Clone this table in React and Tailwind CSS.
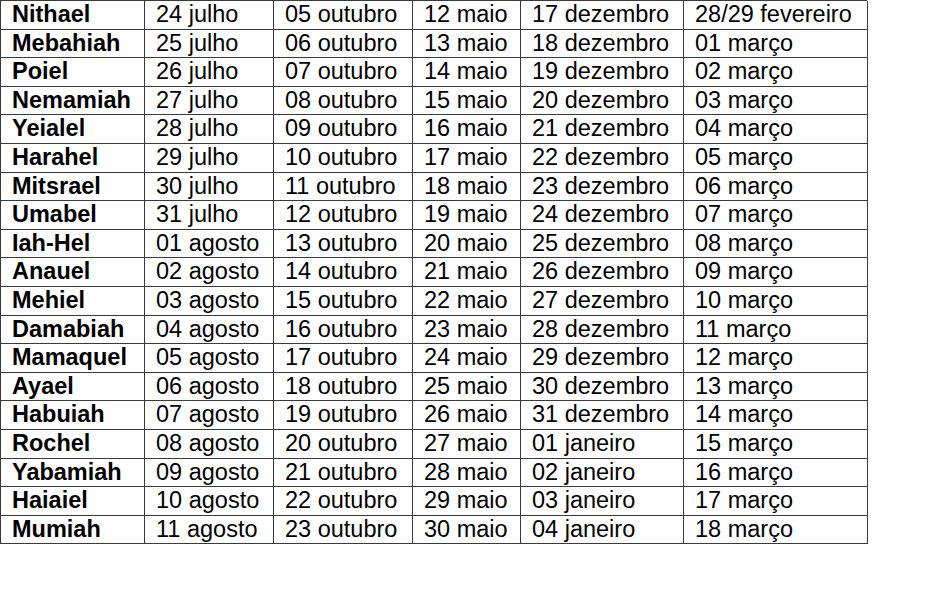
import React from "react";

const rows = [
  ["Nithael", "24 julho", "05 outubro", "12 maio", "17 dezembro", "28/29 fevereiro"],
  ["Mebahiah", "25 julho", "06 outubro", "13 maio", "18 dezembro", "01 março"],
  ["Poiel", "26 julho", "07 outubro", "14 maio", "19 dezembro", "02 março"],
  ["Nemamiah", "27 julho", "08 outubro", "15 maio", "20 dezembro", "03 março"],
  ["Yeialel", "28 julho", "09 outubro", "16 maio", "21 dezembro", "04 março"],
  ["Harahel", "29 julho", "10 outubro", "17 maio", "22 dezembro", "05 março"],
  ["Mitsrael", "30 julho", "11 outubro", "18 maio", "23 dezembro", "06 março"],
  ["Umabel", "31 julho", "12 outubro", "19 maio", "24 dezembro", "07 março"],
  ["Iah-Hel", "01 agosto", "13 outubro", "20 maio", "25 dezembro", "08 março"],
  ["Anauel", "02 agosto", "14 outubro", "21 maio", "26 dezembro", "09 março"],
  ["Mehiel", "03 agosto", "15 outubro", "22 maio", "27 dezembro", "10 março"],
  ["Damabiah", "04 agosto", "16 outubro", "23 maio", "28 dezembro", "11 março"],
  ["Mamaquel", "05 agosto", "17 outubro", "24 maio", "29 dezembro", "12 março"],
  ["Ayael", "06 agosto", "18 outubro", "25 maio", "30 dezembro", "13 março"],
  ["Habuiah", "07 agosto", "19 outubro", "26 maio", "31 dezembro", "14 março"],
  ["Rochel", "08 agosto", "20 outubro", "27 maio", "01 janeiro", "15 março"],
  ["Yabamiah", "09 agosto", "21 outubro", "28 maio", "02 janeiro", "16 março"],
  ["Haiaiel", "10 agosto", "22 outubro", "29 maio", "03 janeiro", "17 março"],
  ["Mumiah", "11 agosto", "23 outubro", "30 maio", "04 janeiro", "18 março"],
];

export default function App() {
  return (
    <div
      className="w-[950px] h-[597px] bg-white text-black overflow-hidden"
      style={{ fontFamily: '"Liberation Sans", Arial, sans-serif' }}
    >
      {/* calendar table */}
      <div className="grid grid-cols-[144px_129px_139px_108px_163px_184px] auto-rows-[28.6px] w-[867px] border-l border-t border-[#3a3a3a]">
        {rows.map((r, i) =>
          r.map((cell, j) => (
            <div
              key={i + "-" + j}
              className={
                "flex items-center pl-[11px] border-r border-b border-[#3a3a3a] whitespace-nowrap text-[23.5px] leading-none " +
                (j === 0 ? "font-bold" : "")
              }
            >
              {cell}
            </div>
          ))
        )}
      </div>
    </div>
  );
}
